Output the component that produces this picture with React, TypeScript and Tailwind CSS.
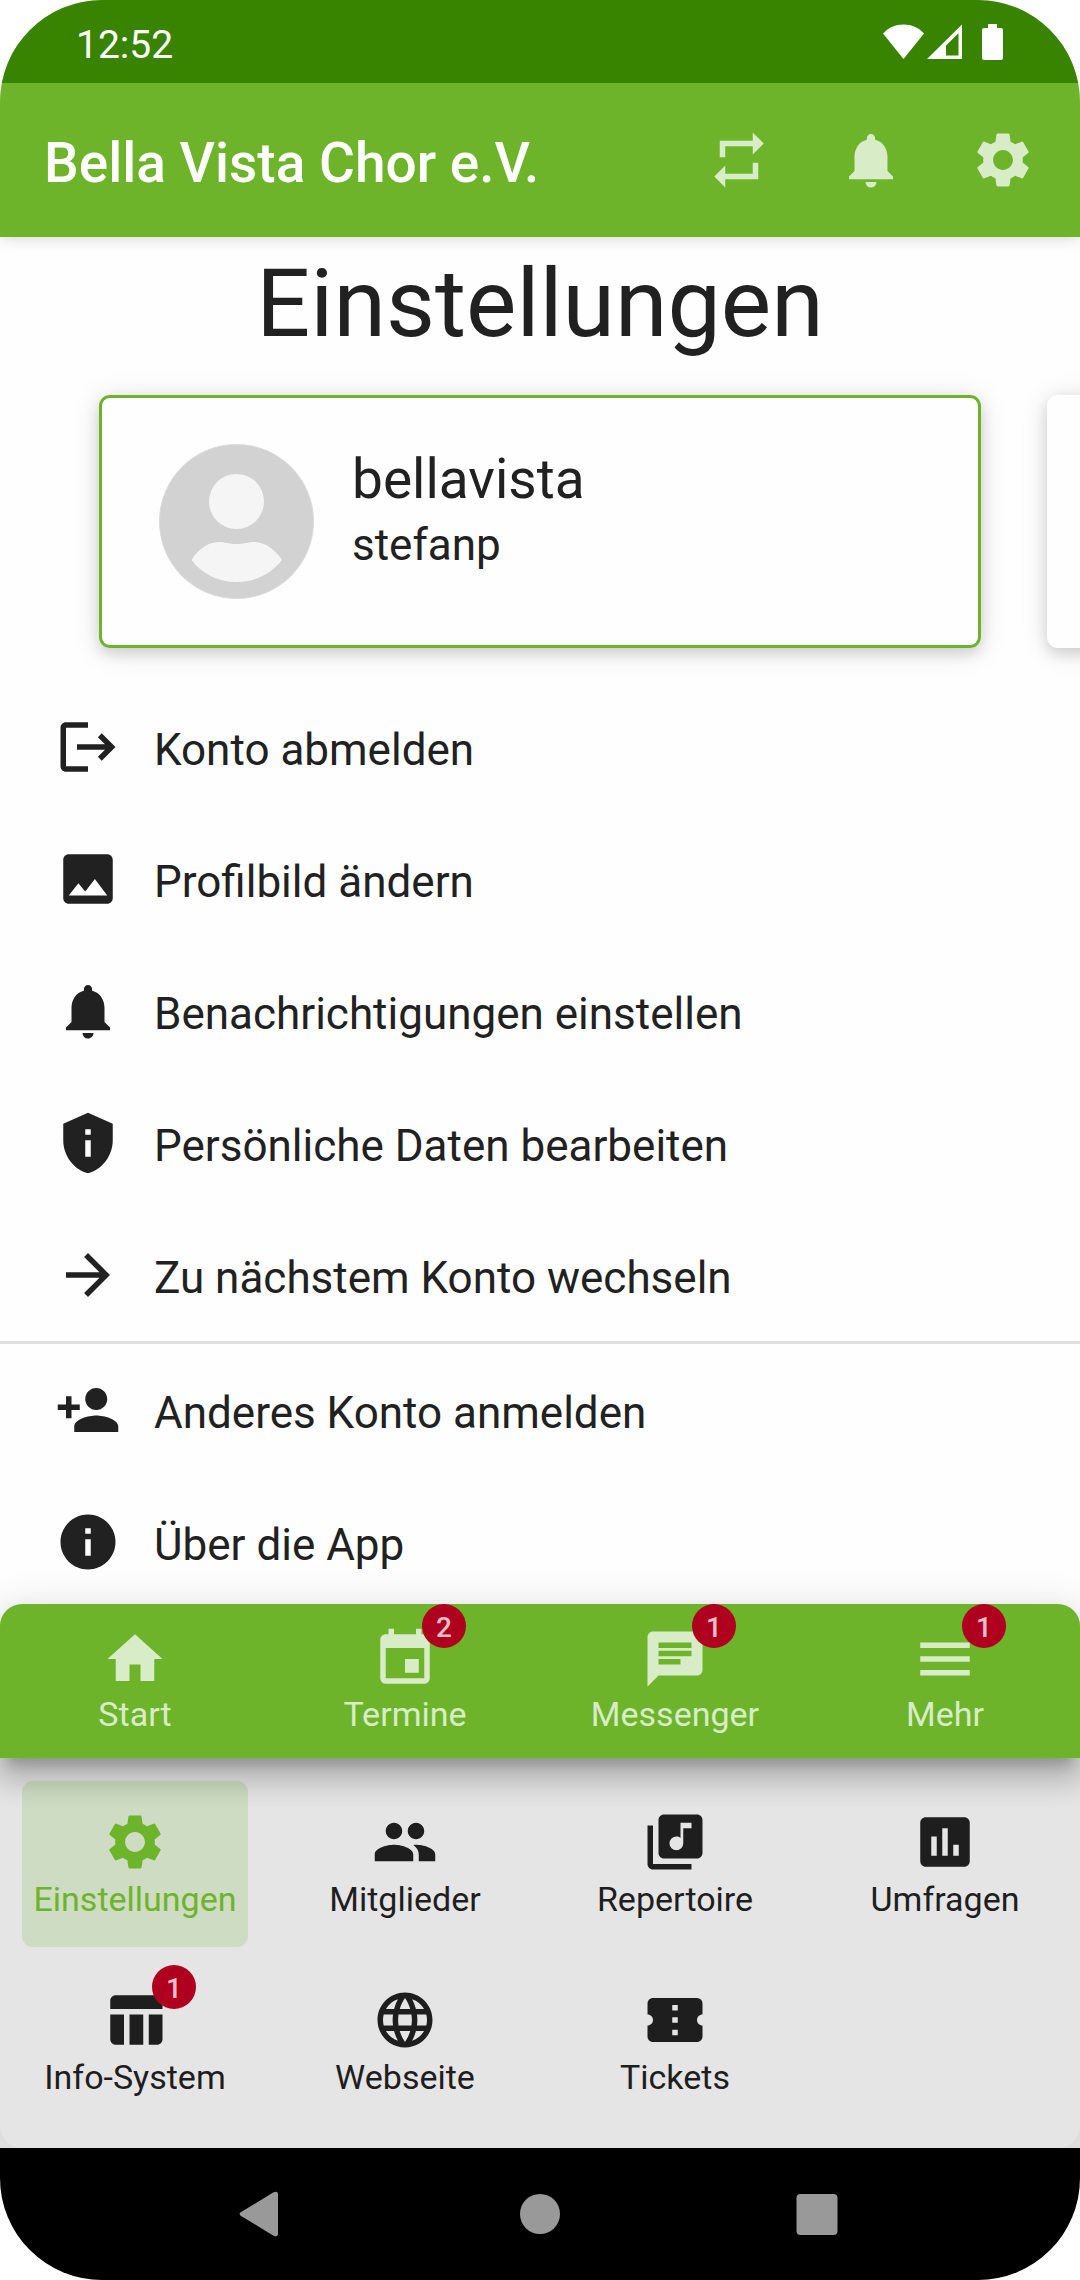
import type { IconType } from 'react-icons';
import {
  MdArrowForward,
  MdChat,
  MdConfirmationNumber,
  MdEvent,
  MdHome,
  MdImage,
  MdInfo,
  MdLanguage,
  MdLibraryMusic,
  MdLogout,
  MdMenu,
  MdNotifications,
  MdPeople,
  MdPersonAdd,
  MdPoll,
  MdPrivacyTip,
  MdRepeat,
  MdSettings,
  MdTableChart,
} from 'react-icons/md';

type Entry = { label: string; icon: IconType; badge?: number; active?: boolean };

const accountActions: Entry[] = [
  { label: 'Konto abmelden', icon: MdLogout },
  { label: 'Profilbild ändern', icon: MdImage },
  { label: 'Benachrichtigungen einstellen', icon: MdNotifications },
  { label: 'Persönliche Daten bearbeiten', icon: MdPrivacyTip },
  { label: 'Zu nächstem Konto wechseln', icon: MdArrowForward },
];

const appActions: Entry[] = [
  { label: 'Anderes Konto anmelden', icon: MdPersonAdd },
  { label: 'Über die App', icon: MdInfo },
];

const tabs: Entry[] = [
  { label: 'Start', icon: MdHome },
  { label: 'Termine', icon: MdEvent, badge: 2 },
  { label: 'Messenger', icon: MdChat, badge: 1 },
  { label: 'Mehr', icon: MdMenu, badge: 1 },
];

const moreItems: Entry[] = [
  { label: 'Einstellungen', icon: MdSettings, active: true },
  { label: 'Mitglieder', icon: MdPeople },
  { label: 'Repertoire', icon: MdLibraryMusic },
  { label: 'Umfragen', icon: MdPoll },
  { label: 'Info-System', icon: MdTableChart, badge: 1 },
  { label: 'Webseite', icon: MdLanguage },
  { label: 'Tickets', icon: MdConfirmationNumber },
];

function StatusBar() {
  return (
    <div className="relative z-20 flex h-[83px] shrink-0 items-center justify-between bg-[#388400] pr-[77px] pl-[76px] text-white">
      <span className="pt-1.5 text-[39px] leading-[44px]">12:52</span>
      <div className="flex items-center">
        <svg width="41" height="36" viewBox="0 0 41 36" fill="currentColor">
          <path d="M20.500 35L0 9.500C5.500 3.500 12.500 0.500 20.500 0.500S35.500 3.500 41 9.500Z" />
        </svg>
        <svg className="ml-[3px]" width="35" height="36" viewBox="0 0 35 36" fill="currentColor">
          <path fillRule="evenodd" d="M35 0.500V35H0ZM31.500 9.200L19 21.500V31.500H31.500Z" />
        </svg>
        <svg className="ml-5" width="21" height="36" viewBox="0 0 21 36" fill="currentColor">
          <path d="M6 0H15V4H19Q21 4 21 6V34Q21 36 19 36H2Q0 36 0 34V6Q0 4 2 4H6Z" />
        </svg>
      </div>
    </div>
  );
}

function Header() {
  const actions = [
    { label: 'Konto wechseln', icon: MdRepeat },
    { label: 'Benachrichtigungen', icon: MdNotifications },
    { label: 'Einstellungen', icon: MdSettings },
  ];

  return (
    <header className="relative z-10 flex h-[154px] shrink-0 items-center justify-between bg-[#6db42b] pr-[11px] pl-11 shadow-[0_1px_14px_rgba(0,0,0,0.16)]">
      <div className="pt-1.5 text-[55px] leading-[66px] font-medium text-white">Bella Vista Chor e.V.</div>
      <div className="flex text-[#d9ecc8]">
        {actions.map(({ label, icon: Icon }) => (
          <button key={label} aria-label={label} className="flex size-[132px] items-center justify-center">
            <Icon className="size-[66px]" />
          </button>
        ))}
      </div>
    </header>
  );
}

function Avatar() {
  return (
    <svg className="size-[155px] shrink-0" viewBox="0 0 155 155">
      <circle cx="77.500" cy="77.500" r="77" fill="#d2d2d2" stroke="#dadada" />
      <circle cx="77.500" cy="57.500" r="27.500" fill="#f5f5f5" />
      <path
        d="M32.500 116C40 104 50 98 60 98C66 98 70 100 77.500 100S89 98 95 98C105 98 115 104 123 116C112 130 96 138 77.500 138S43 130 32.500 116Z"
        fill="#f5f5f5"
      />
    </svg>
  );
}

function ActionList({ items }: { items: Entry[] }) {
  return (
    <ul>
      {items.map(({ label, icon: Icon }) => (
        <li key={label}>
          <button className="flex h-[132px] w-full items-center gap-[33px] px-[55px] text-start">
            <Icon className="size-[66px] shrink-0" />
            <span className="pt-1.5 text-[44px] leading-[66px]">{label}</span>
          </button>
        </li>
      ))}
    </ul>
  );
}

function IconWithBadge({ icon: Icon, badge }: { icon: IconType; badge?: number }) {
  return (
    <span className="relative">
      <Icon className="size-[66px]" />
      {badge && (
        <span className="absolute -top-[22px] left-[50px] flex size-11 items-center justify-center rounded-full bg-[#b00020] pt-1 text-[28px] font-medium text-white/75">
          {badge}
        </span>
      )}
    </span>
  );
}

function BottomNav() {
  return (
    <div className="relative z-10 shrink-0">
      <nav className="relative z-10 grid grid-cols-4 rounded-t-[22px] bg-[#6db42b] text-[#d9ecc8] shadow-[0_14px_14px_-8px_rgba(0,0,0,0.2),0_22px_28px_3px_rgba(0,0,0,0.14),0_8px_39px_6px_rgba(0,0,0,0.12)]">
        {tabs.map((tab) => (
          <a key={tab.label} href="#" className="flex flex-col items-center pt-[22px] pb-[22px]">
            <IconWithBadge icon={tab.icon} badge={tab.badge} />
            <span className="text-[34px] leading-[44px]">{tab.label}</span>
          </a>
        ))}
      </nav>
      <div className="bg-[#dedede]">
        <nav className="grid grid-cols-4 gap-y-3 rounded-b-[22px] bg-[#e5e5e5] py-[23px]">
          {moreItems.map((item) => (
            <a
              key={item.label}
              href="#"
              className={`mx-[22px] flex flex-col items-center gap-0.5 rounded-[11px] pt-7 pb-[26px] ${
                item.active ? 'bg-[#cddcc2] text-[#6db42b]' : 'text-[#1e1e1e]'
              }`}
            >
              <IconWithBadge icon={item.icon} badge={item.badge} />
              <span className="text-[34px] leading-[44px]">{item.label}</span>
            </a>
          ))}
        </nav>
      </div>
    </div>
  );
}

function SystemBar() {
  return (
    <div className="flex h-[132px] shrink-0 items-center justify-center gap-[229px] bg-black text-[#999]">
      <button aria-label="Zurück">
        <svg className="size-12" viewBox="0 0 48 48" fill="currentColor">
          <path d="M1.700 22.300L34.500 2.300Q39 0.500 39 4.500V43.500Q39 47.500 34.500 45.700L1.700 25.700Q-0.500 24 1.700 22.300Z" />
        </svg>
      </button>
      <button aria-label="Startbildschirm">
        <svg className="size-12" viewBox="0 0 48 48" fill="currentColor">
          <circle cx="24" cy="24" r="20" />
        </svg>
      </button>
      <button aria-label="Übersicht">
        <svg className="size-12" viewBox="0 0 48 48" fill="currentColor">
          <rect x="3.500" y="4" width="41" height="41" rx="4" />
        </svg>
      </button>
    </div>
  );
}

export default function App() {
  return (
    <div className="flex h-screen flex-col overflow-hidden rounded-[102px] bg-[#fefefe] font-[Roboto,sans-serif] text-[#212121]">
      <StatusBar />
      <Header />

      <main className="min-h-0 flex-1 overflow-hidden">
        <h1 className="pt-3 text-center text-[95px] leading-[110px]">Einstellungen</h1>

        <div className="mt-9 mb-[33px] flex gap-[66px] px-[99px]">
          <div className="flex w-full shrink-0 gap-[38px] rounded-[11px] border-[3px] border-[#6db42b] px-[57px] py-[46px] shadow-[0_3px_28px_rgba(0,0,0,0.12),0_6px_14px_rgba(0,0,0,0.12)]">
            <Avatar />
            <div className="pt-0.5">
              <div className="text-[55px] leading-[66px]">bellavista</div>
              <div className="text-[44px] leading-[66px]">stefanp</div>
            </div>
          </div>
          <div className="w-full shrink-0 rounded-[11px] shadow-[0_3px_28px_rgba(0,0,0,0.12),0_6px_14px_rgba(0,0,0,0.12)]" />
        </div>

        <ActionList items={accountActions} />
        <hr className="border-t-[3px] border-[#e0e0e0]" />
        <ActionList items={appActions} />
      </main>

      <BottomNav />
      <SystemBar />
    </div>
  );
}
